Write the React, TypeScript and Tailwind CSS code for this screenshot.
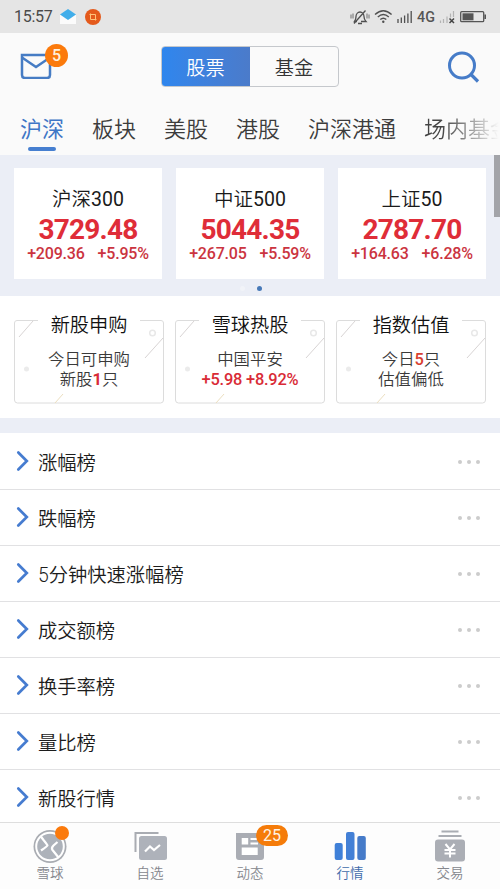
import type { ReactNode } from 'react';

interface IndexCardProps {
    name: string;
    code: string;
    value: string;
    change: string;
    percent: string;
}

interface InfoBoxProps {
    title: string;
    children: ReactNode;
}

interface NavItemProps {
    label: string;
    active?: boolean;
    badge?: ReactNode;
    children: ReactNode;
}

const indexes: IndexCardProps[] = [
    { name: '沪深', code: '300', value: '3729.48', change: '+209.36', percent: '+5.95%' },
    { name: '中证', code: '500', value: '5044.35', change: '+267.05', percent: '+5.59%' },
    { name: '上证', code: '50', value: '2787.70', change: '+164.63', percent: '+6.28%' },
];

const tabs = ['板块', '美股', '港股', '沪深港通'];

const rankings = ['涨幅榜', '跌幅榜', '5分钟快速涨幅榜', '成交额榜', '换手率榜', '量比榜', '新股行情'];

const StatusBar = () => (
    <div className="flex h-[33px] shrink-0 items-center bg-[#e5e5e5] pl-3.5 text-[#4a4a4a]">
        <span className="mt-px w-[46px] text-[16px] leading-[34px] tracking-[-0.3px]">15:57</span>
        <svg width="16" height="16" viewBox="0 0 16 16">
            <path d="M0 6h16v9H0z" fill="#fbfbfb" />
            <path d="M8 0l8 5.5L8 11 0 5.5z" fill="#41aeea" />
        </svg>
        <svg className="ml-[9px]" width="16" height="16" viewBox="0 0 16 16">
            <circle cx="8" cy="8" r="8" fill="#e45a1c" />
            <path d="M4.500 5.500h6v6M5.500 4.500v6h6" fill="none" stroke="#ffc27a" />
        </svg>
        <svg className="ml-auto" width="137" height="18" viewBox="350 8 137 18">
            <g fill="none" stroke="#505050" strokeWidth="1.3">
                <path d="M357 21.500h-2.500q1.500-2 1.500-5a4 4.500 0 0 1 8 0q0 3 2 5h-5M358 23.500h4M354 23.500l11.500-13" />
                <path d="M351 14.500v4M353 13.500v5M367 13.500v5M369 14.500v4" strokeWidth="0.8" />
                <path d="M375 14.500q8.300-7.500 16.600 0M377.800 17q5.500-5 11 0M380.300 19.500q3-2.600 6 0" strokeWidth="1.4" />
            </g>
            <circle cx="383.300" cy="21.700" r="1.200" fill="#505050" />
            <path d="M398 19v4M401.300 17.500v5.500M404.600 15.500v7.500M407.900 13.500v9.500M411.200 11v12" stroke="#505050" strokeWidth="1.300" />
            <text x="417" y="22" fontSize="14.300" fontWeight="500" fontFamily="Roboto" fill="#555">4G</text>
            <path d="M440.500 20.500v2.500M443.500 19v4M447 16.500v6.500M450.500 13.500v4M453.500 11v6" stroke="#b3b3b3" strokeWidth="1.200" />
            <path d="M449.500 18.500l4.500 4.500M454 18.500l-4.500 4.500" stroke="#444" strokeWidth="1.500" />
            <rect x="460.700" y="11.700" width="23" height="10" rx="1" fill="none" stroke="#555" strokeWidth="1.300" />
            <path d="M462.500 13.300h11v7h-11z" fill="#555" />
            <path d="M485.200 14.500v4.500" stroke="#555" strokeWidth="1.600" />
        </svg>
        <div className="w-[13px]" />
    </div>
);

const Header = () => (
    <header className="grid h-[67px] shrink-0 grid-cols-[161px_178px_161px] items-center">
        <div className="relative ml-5 h-8 w-12">
            <svg className="absolute top-0 left-0" width="32" height="28" viewBox="0 0 32 28">
                <path d="M2 4h28v20q0 3-3 3H5q-3 0-3-3z" fill="none" stroke="#467cc4" strokeWidth="2.500" />
                <path d="M2 6.500l14 9.500 14-9.500" fill="none" stroke="#467cc4" strokeWidth="2.500" />
            </svg>
            <span className="absolute -top-[7px] left-[25px] size-[23px] rounded-full bg-[#fb7a0c] text-center text-[16px] leading-[23px] font-medium text-[#fff1dc]">5</span>
        </div>
        <div className="flex h-[41px] overflow-hidden rounded-[4px] border border-[#c5c8cc] text-[19.2px]">
            <span className="-my-px -ml-px flex w-[89px] items-center justify-center bg-linear-to-r from-[#2e86ee] to-[#4b7bca] pt-[5px] font-[350] text-white">股票</span>
            <span className="flex flex-1 items-center justify-center pt-[5px] font-[350] text-[#333]">基金</span>
        </div>
        <svg className="ml-[108px]" width="34" height="34" viewBox="0 0 34 34">
            <circle cx="15" cy="15.500" r="12.500" fill="none" stroke="#467cc8" strokeWidth="3" />
            <path d="M24 24.500l7 7" stroke="#467cc8" strokeWidth="3.200" />
        </svg>
    </header>
);

const TabBar = () => (
    <nav className="flex h-[55px] shrink-0 gap-7 overflow-hidden pt-[14px] pl-5 text-[22px] leading-[32px] font-[350] whitespace-nowrap text-[#3c3c3c]">
        <div className="flex flex-col items-center font-normal text-[#3f76c6]">
            <span>沪深</span>
            <span className="mt-px h-1 w-7 rounded-full bg-[#467fd0]" />
        </div>
        {tabs.map((tab) => (
            <span key={tab}>{tab}</span>
        ))}
        <span className="bg-linear-to-r from-[#444] from-20% to-[#fafafa] to-85% bg-clip-text text-transparent">场内基金</span>
    </nav>
);

const IndexCard = ({ name, code, value, change, percent }: IndexCardProps) => (
    <div className="flex h-[111px] flex-col items-center bg-white pt-[18px]">
        <span className="text-[19.5px] leading-[27px] font-[350] text-[#1a1a1a]">
            {name}<span className="font-normal">{code}</span>
        </span>
        <span className="text-[28px] leading-[34px] font-bold tracking-[-0.8px] text-[#df2d38]">{value}</span>
        <div className="-mt-px flex gap-[13px] text-[16px] leading-4 font-medium tracking-[-0.2px] text-[#cb3440]">
            <span>{change}</span>
            <span>{percent}</span>
        </div>
    </div>
);

const InfoBox = ({ title, children }: InfoBoxProps) => (
    <div className="relative h-[84px] text-center">
        <svg className="absolute inset-0" width="150" height="84" viewBox="0 0 150 84" fill="none">
            <path d="M24 .5H3Q.5.500.500 3v77q0 3 3 3h143q3 0 3-3V3q0-2.500-2.500-2.500h-21" stroke="#dcdcdc" />
            <path d="M5 17L19 1M131 38l18-20" stroke="#d8d4d4" />
            <path d="M41 83l8-9" stroke="#ecdfc0" />
            <circle cx="138.500" cy="13" r="2.800" stroke="#e8e8e8" strokeWidth="1.500" />
            <circle cx="12.500" cy="49" r="2.500" fill="#ebebeb" />
        </svg>
        <div className="relative -top-2 text-[19.2px] leading-[27px] font-[350] text-[#111]">{title}</div>
        <div className="relative pt-[3px] text-[16.4px] leading-5 font-[350] text-[#3a3a3a]">{children}</div>
    </div>
);

const RankingRow = ({ label }: { label: string }) => (
    <li className="flex h-14 shrink-0 items-center border-b border-[#e1e1e3] pl-4">
        <svg className="-mt-0.5" width="13" height="22" viewBox="0 0 13 22" fill="none">
            <path d="M2.300 2.500l8.500 8.500-8.500 8.500" stroke="#467cd0" strokeWidth="2.700" strokeLinecap="round" />
        </svg>
        <span className="mt-[3px] ml-[9px] text-[19.3px] leading-[29px] font-[350] text-[#1c1c1c]">{label}</span>
        <span className="mr-5 ml-auto flex gap-[5px]">
            <i className="size-1 rounded-full bg-[#ccc]" />
            <i className="size-1 rounded-full bg-[#ccc]" />
            <i className="size-1 rounded-full bg-[#ccc]" />
        </span>
    </li>
);

const NavItem = ({ label, active, badge, children }: NavItemProps) => (
    <div className={`relative flex flex-col items-center pt-[7px] ${active ? 'text-[#3f6bab]' : 'text-[#85878d]'}`}>
        <svg width="36" height="34" viewBox="0 0 36 34" fill="none">
            {children}
        </svg>
        <span className="text-[13.5px] leading-[18px] font-[350]">{label}</span>
        {badge}
    </div>
);

const BottomNav = () => (
    <footer className="grid h-[67px] shrink-0 grid-cols-5 border-t border-[#dedede] bg-[#fdfdfd]">
        <NavItem label="雪球" badge={<span className="absolute top-[3px] left-[55px] size-[14px] rounded-full bg-[#fb7a0c]" />}>
            <circle cx="18" cy="16.500" r="16.500" fill="#a9acb2" />
            <circle cx="18" cy="16.500" r="13.800" fill="#adb2ba" stroke="#fff" strokeWidth="2" />
            <path d="M8.500 6l3 4q4 5 4 5.500t-6.500 5M25.500 12l-4 3.500q-2.500 2.500-1 4.500l6 7.500" stroke="#fff" strokeWidth="2.200" />
        </NavItem>
        <NavItem label="自选">
            <path d="M3.500 22V3h23" stroke="#a9acb2" strokeWidth="2" />
            <rect x="7" y="6" width="28" height="24" rx="2.500" fill="#aeb2ba" />
            <path d="M13 21.500l5-5 4 3.500 6-5" stroke="#fff" strokeWidth="2.200" />
        </NavItem>
        <NavItem label="动态" badge={<span className="absolute top-[2px] left-[56px] h-[21px] w-8 rounded-full bg-[#f57c0a] text-center text-[16px] leading-[21px] text-[#fff4e5]">25</span>}>
            <path d="M4 3h24v9h4v15q0 3-3 3H7q-3 0-3-3z" fill="#aaadb4" />
            <path d="M9.700 8h6.500v6.500H9.700zM18.500 8H26v2h-7.500zM18.500 12.500H26v2h-7.500zM9.700 17.500h16V25h-16z" fill="#fff" />
        </NavItem>
        <NavItem label="行情" active>
            <rect x="2.700" y="13" width="8" height="17" rx="2" fill="#3f80d8" />
            <rect x="14" y="2" width="8.500" height="28" rx="2" fill="#4380d6" />
            <rect x="25.300" y="6" width="8.500" height="24" rx="2" fill="#467bc9" />
        </NavItem>
        <NavItem label="交易">
            <path d="M9.500 1.500h17M6.500 6h23" stroke="#aaadb3" strokeWidth="2" />
            <rect x="3" y="9.500" width="30" height="22" rx="3" fill="#abaeb5" />
            <path d="M13.500 14l4.500 5.500 4.500-5.500M12.500 20h11M12.500 23.500h11M18 19v8.500" stroke="#fff" strokeWidth="2" />
        </NavItem>
    </footer>
);

const App = () => {
    return (
        <div className="flex h-[889px] w-[500px] flex-col overflow-hidden bg-[#fafafa] font-[Roboto,'Noto_Sans_CJK_SC',sans-serif]">
            <StatusBar />
            <Header />
            <TabBar />

            <section className="relative h-[141px] shrink-0 bg-[#ebeef6] pt-[13px]">
                <div className="grid grid-cols-3 gap-[14px] px-[14px]">
                    {indexes.map((item) => (
                        <IndexCard key={item.code} {...item} />
                    ))}
                </div>
                <div className="mt-[7px] flex justify-center gap-3 pl-px">
                    <i className="size-[5px] rounded-full bg-[#f1f3f8]" />
                    <i className="size-[5px] rounded-full bg-[#4779b8]" />
                </div>
                <div className="absolute top-0 right-0 h-[62px] w-[6px] bg-[#a3a4a9]" />
            </section>

            <section className="grid h-[122px] shrink-0 grid-cols-3 gap-[11px] bg-white px-[14px] pt-6">
                <InfoBox title="新股申购">
                    今日可申购<br />
                    新股<b className="font-bold text-[#d92b36]">1</b>只
                </InfoBox>
                <InfoBox title="雪球热股">
                    中国平安<br />
                    <b className="font-medium tracking-[-0.2px] text-[#d92b36]">+5.98 +8.92%</b>
                </InfoBox>
                <InfoBox title="指数估值">
                    今日<b className="font-medium text-[#d9402f]">5</b>只<br />
                    估值偏低
                </InfoBox>
            </section>

            <div className="h-[15px] shrink-0 bg-[#ebeef6]" />

            <ul className="flex min-h-0 flex-1 flex-col overflow-hidden bg-white pt-px">
                {rankings.map((label) => (
                    <RankingRow key={label} label={label} />
                ))}
            </ul>

            <BottomNav />
        </div>
    );
};

export default App;
